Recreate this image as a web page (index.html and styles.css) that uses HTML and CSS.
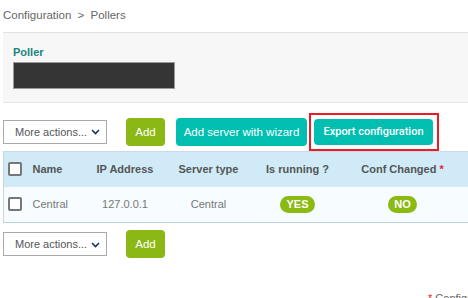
FILE: index.html
```html
<!DOCTYPE html>
<html lang="en">
<head>
	<meta charset="UTF-8">
	<title>Pollers</title>
	<link rel="stylesheet" href="styles.css">
</head>
<body>
	<div class="page">
		<!-- breadcrumb -->
		<div class="breadcrumb">Configuration <span class="sep">&gt;</span> Pollers</div>

		<!-- search panel -->
		<div class="filters">
			<label class="filter-label">Poller</label>
			<div class="filter-input"></div>
		</div>

		<!-- actions -->
		<div class="toolbar">
			<div class="select"><span>More actions...</span>
				<svg class="chevron" width="9" height="6" viewBox="0 0 9 6"><path d="M1 1l3.5 3.5L8 1" fill="none" stroke="#1d3260" stroke-width="1.6"/></svg>
			</div>
			<button class="btn btn-green">Add</button>
			<button class="btn btn-teal">Add server with wizard</button>
			<span class="highlight"><button class="btn btn-teal btn-strong">Export configuration</button></span>
		</div>

		<table class="list">
			<thead>
				<tr>
					<th class="col-check"><span class="check"></span></th>
					<th class="col-name">Name</th>
					<th class="col-ip">IP Address</th>
					<th class="col-type">Server type</th>
					<th class="col-run">Is running ?</th>
					<th class="col-conf">Conf Changed <span class="req">*</span></th>
					<th></th>
				</tr>
			</thead>
			<tbody>
				<tr>
					<td class="col-check"><span class="check"></span></td>
					<td class="col-name">Central</td>
					<td>127.0.0.1</td>
					<td>Central</td>
					<td><span class="badge">YES</span></td>
					<td><span class="badge">NO</span></td>
					<td></td>
				</tr>
			</tbody>
		</table>

		<div class="toolbar toolbar-bottom">
			<div class="select"><span>More actions...</span>
				<svg class="chevron" width="9" height="6" viewBox="0 0 9 6"><path d="M1 1l3.5 3.5L8 1" fill="none" stroke="#1d3260" stroke-width="1.6"/></svg>
			</div>
			<button class="btn btn-green">Add</button>
		</div>

		<div class="note"><span class="req">*</span> Configuration changed</div>
	</div>
</body>
</html>
```

FILE: styles.css
```css
* {
	margin: 0;
	padding: 0;
	box-sizing: border-box;
}
body {
	font: normal 11px/14px "Liberation Sans", Arial, sans-serif;
	color: #666;
	background: #fff;
	overflow: hidden;
}
.page {
	width: 490px;
	padding-left: 3px;
}
.breadcrumb {
	height: 32px;
	padding-top: 8px;
	color: #666;
	font-size: 11.5px;
}
.breadcrumb .sep {
	margin: 0 3px;
}

/* search panel */
.filters {
	height: 71px;
	padding: 12px 10px 0;
	background: #f7f7f7;
	border-top: 1px solid #e2e2e2;
	border-bottom: 1px solid #e6e6e6;
}
.filter-label {
	display: block;
	font-weight: bold;
	color: #17857c;
	line-height: 14px;
	margin-bottom: 3px;
}
.filter-input {
	width: 162px;
	height: 27px;
	background: #353535;
	border: 1px solid #999;
}

/* toolbars */
.toolbar {
	display: flex;
	align-items: center;
	margin-top: 9px;
	height: 39px;
}
.select {
	display: flex;
	align-items: center;
	justify-content: space-between;
	width: 104px;
	height: 24px;
	padding: 0 6px 0 11px;
	border: 1px solid #aaa;
	background: #fff;
	color: #555;
	font-size: 11px;
	white-space: nowrap;
}
.chevron {
	margin-top: 1px;
	flex: none;
}
.btn {
	height: 28px;
	border: none;
	border-radius: 4px;
	color: #fff;
	font: normal 11.5px "Liberation Sans", Arial, sans-serif;
	padding: 0 10px;
	white-space: nowrap;
}
.btn-green {
	background: #8cb815;
	width: 39px;
	padding: 0;
	margin-left: 19px;
}
.btn-teal {
	background: #00bfb1;
}
.toolbar > .btn-teal {
	width: 131px;
	margin-left: 11px;
	padding: 0;
}
.btn-strong {
	width: 119px;
	height: 26px;
	padding: 0;
	font: 500 11px "Roboto", sans-serif;
}
.highlight {
	display: flex;
	margin-left: 2px;
	padding: 4px 4px 4px 3px;
	border: 2px solid #ed1c24;
}

/* table */
.list {
	width: 487px;
	border-collapse: collapse;
	table-layout: fixed;
	border-left: 1px solid #c6d6e0;
}
.list th {
	height: 35px;
	background: #d0ebf7;
	color: #555;
	font-weight: bold;
	font-size: 11px;
	text-align: center;
	white-space: nowrap;
	border-top: 1px solid #c8dbe6;
}
.list td {
	height: 36px;
	background: #f6fcff;
	color: #777;
	text-align: center;
	border-bottom: 1px solid #b9cfe2;
}
.list .col-check {
	width: 25px;
	text-align: left;
	padding-left: 4px;
}
.list .col-name {
	width: 57px;
	text-align: left;
	padding-left: 4px;
}
.list .col-ip {
	width: 79px;
}
.list .col-type {
	width: 88px;
}
.list .col-run {
	width: 90px;
}
.list .col-conf {
	width: 120px;
}
.check {
	display: block;
	width: 14px;
	height: 14px;
	border: 2px solid #777;
	border-radius: 2px;
	background: #fff;
}
.req {
	color: #e8232a;
}
.badge {
	display: inline-block;
	height: 17px;
	line-height: 17px;
	padding: 0 6px;
	border-radius: 9px;
	background: #8bba12;
	color: #fff;
	font-weight: bold;
	font-size: 11px;
}

.toolbar-bottom {
	margin-top: 7px;
	height: 28px;
}
.note {
	margin-top: 33px;
	padding-left: 425px;
	white-space: nowrap;
}
```
